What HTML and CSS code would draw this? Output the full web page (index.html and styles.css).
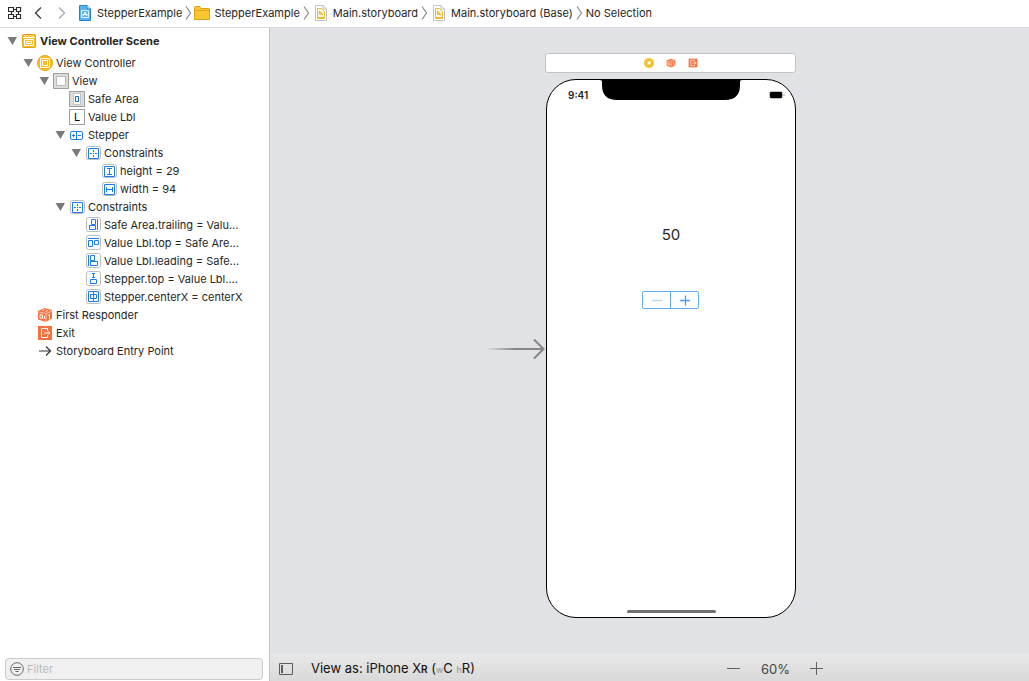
FILE: index.html
```html
<!DOCTYPE html>
<html lang="en">
<head>
<meta charset="utf-8">
<title>Main.storyboard</title>
<link rel="stylesheet" href="styles.css">
</head>
<body>
<svg class="defs" aria-hidden="true">
  <defs>
    <symbol id="tri" viewBox="0 0 10 8"><path d="M.5 0h9.500L5.500 8z" fill="#7a7a7a"/></symbol>
    <symbol id="sep" viewBox="0 0 7 16"><path d="M1 1.500L5.500 8 1 14.500" fill="none" stroke="#8a8a8a" stroke-width="1.200"/></symbol>
    <symbol id="story" viewBox="0 0 12 16">
      <path d="M.5.5h7.500l3.500 3.500v11.500H.5z" fill="#fff" stroke="#c3c3c3"/>
      <path d="M8 .5V4h3.500" fill="none" stroke="#c3c3c3"/>
      <path d="M2.500 3.500h4l3 3v7h-7z" fill="#fffaf0" stroke="#eeb72e"/>
      <path d="M4 6l4 4M5 6.500a2 2 0 0 0 0 3h3" fill="none" stroke="#eeb72e" stroke-width="1.200"/>
      <path d="M2 12.500h8" stroke="#eeb72e"/>
    </symbol>
    <symbol id="frame" viewBox="0 0 16 16">
      <rect x="1.500" y="1.500" width="14" height="13" rx="2" fill="#fff" stroke="#bcbcbc"/>
    </symbol>
    <symbol id="tallframe" viewBox="0 0 16 16">
      <rect x="1.500" y=".5" width="14" height="14" rx="2" fill="#fff" stroke="#bcbcbc"/>
    </symbol>
    <symbol id="constraints" viewBox="0 0 16 16">
      <use href="#frame"/>
      <path d="M3.500 3.500h10v10h-10zM5 8.500h2M8 8.500h1M10 8.500h2M8.500 5v2M8.500 10v2" fill="none" stroke="#1a7cf2"/>
    </symbol>
    <symbol id="cube" viewBox="0 0 16 16">
      <path d="M1 4L7 1l8 2v8.500L9 15l-8-2.500z" fill="#f6723f"/>
      <path d="M1.500 5L9 6.500l6-2.500M9 6.500V15" fill="none" stroke="#fff" stroke-width=".6"/>
      <path d="M5 3.500l2.500-1M8.500 4.500L11 3.500" fill="none" stroke="#fff" stroke-width=".8"/>
      <path d="M3 7.500l2.500.5v3.500L3 11zM7.500 9v3M11 8.500l1.500-1v5" fill="none" stroke="#fff" stroke-width=".9"/>
    </symbol>
    <symbol id="exit" viewBox="0 0 16 16">
      <rect x="1" y="1" width="14" height="14" fill="#f6723f"/>
      <path d="M10.500 6V3.500h-6v9h6V10M7 8h6M11.500 6.500L13 8l-1.500 1.500" fill="none" stroke="#fff"/>
    </symbol>
  </defs>
</svg>
<div class="app">
  <header class="jumpbar">
    <button class="tool" aria-label="Related items"><svg width="14" height="14" viewBox="0 0 14 14"><path d="M.5 1.500h5v4h-5zM8.500 1.500h4v4h-4zM.5 8.500h5v4h-5zM8.500 8.500h4v4h-4zM5.500 3.500h3M3.500 5.500v3M10.500 5.500v3M5.500 10.500h3" fill="none" stroke="#2b2b2b" stroke-width="1.200"/></svg></button>
    <button class="tool back" aria-label="Back"><svg width="8" height="12" viewBox="0 0 8 12"><path d="M7 .5L1.500 6 7 11.500" fill="none" stroke="#404040" stroke-width="1.400"/></svg></button>
    <button class="tool forward" aria-label="Forward"><svg width="8" height="12" viewBox="0 0 8 12"><path d="M1 .5L6.500 6 1 11.500" fill="none" stroke="#ababab" stroke-width="1.400"/></svg></button>
    <nav class="crumbs" aria-label="Path">
      <a class="crumb" href="#project"><svg width="12" height="16" viewBox="0 0 12 16"><path d="M.5.5h7.500l3.500 3.500v11.500H.5z" fill="#58b4f5" stroke="#267fc9"/><path d="M8 .5V4h3.500" fill="#d7efff" stroke="#267fc9"/><path d="M2.500 5.500h7v7h-7z" fill="none" stroke="#d9f0ff"/><path d="M4 11l2-4 2 4M3.500 9.500h5" fill="none" stroke="#fff"/></svg><span>StepperExample</span></a>
      <svg class="sep"><use href="#sep"/></svg>
      <a class="crumb folder" href="#group"><svg width="16" height="14" viewBox="0 0 16 14"><path d="M.5 1.500q0-1 1-1h4l1.500 2h8q.5 0 .5.500v10.500H.5z" fill="#fbc62f" stroke="#dba118"/><path d="M1 4.500h14" stroke="#e0a51b"/></svg><span>StepperExample</span></a>
      <svg class="sep"><use href="#sep"/></svg>
      <a class="crumb" href="#file"><svg width="12" height="16"><use href="#story"/></svg><span>Main.storyboard</span></a>
      <svg class="sep"><use href="#sep"/></svg>
      <a class="crumb" href="#base"><svg width="12" height="16"><use href="#story"/></svg><span>Main.storyboard (Base)</span></a>
      <svg class="sep"><use href="#sep"/></svg>
      <a class="crumb last" href="#selection"><span>No Selection</span></a>
    </nav>
  </header>
  <div class="work">
    <aside class="outline">
      <ul class="tree">
        <li>
          <div class="row scene-row"><button class="tri" aria-label="Toggle scene"><svg><use href="#tri"/></svg></button><svg class="icon" viewBox="0 0 16 16"><rect x="1.500" y="1.500" width="13" height="13" rx="1" fill="#fabd22" stroke="#e2a010"/><path d="M2 4.500h12" stroke="#fff"/><path d="M3 2.500h1M6 2.500h1M9 2.500h1M12 2.500h1M4.500 3.500h1M7.500 3.500h1M10.500 3.500h1" stroke="#fff3cc"/><path d="M3.500 6.500h9v6h-9zM5.500 8.500h5v2h-5z" fill="none" stroke="#fff"/></svg><span>View Controller Scene</span></div>
          <ul>
            <li>
              <div class="row"><button class="tri" aria-label="Toggle View Controller"><svg><use href="#tri"/></svg></button><svg class="icon" viewBox="0 0 16 16"><circle cx="8" cy="8" r="7.500" fill="#fabd1d" stroke="#e6a40f"/><path d="M3.500 3.500h9v9h-9zM5.500 5.500h5v5h-5z" fill="none" stroke="#fff"/></svg><span>View Controller</span></div>
              <ul>
                <li>
                  <div class="row"><button class="tri" aria-label="Toggle View"><svg><use href="#tri"/></svg></button><svg class="icon" viewBox="0 0 16 16"><path d="M.5.5h15v15H.5z" fill="#dcdcdc" stroke="#9d9d9d"/><path d="M3.500 3.500h9v9h-9z" fill="#fff" stroke="#b8b8b8"/></svg><span>View</span></div>
                  <ul>
                    <li><div class="row leaf"><svg class="icon" viewBox="0 0 16 16"><path d="M.5.5h15v15H.5z" fill="#dcdcdc" stroke="#9d9d9d"/><path d="M4.500 2.500h7v11h-7z" fill="#fff" stroke="#c4c4c4"/><path d="M6.500 5.500h3v5h-3z" fill="#fff" stroke="#1470c0"/></svg><span>Safe Area</span></div></li>
                    <li><div class="row leaf"><span class="icon letter" aria-hidden="true">L</span><span>Value Lbl</span></div></li>
                    <li>
                      <div class="row"><button class="tri" aria-label="Toggle Stepper"><svg><use href="#tri"/></svg></button><svg class="icon" viewBox="0 0 16 16"><rect x="1.500" y="4.500" width="12" height="8" rx="1.500" fill="#fff" stroke="#1a7cf2"/><path d="M7.500 4.500v8M3 8.500h3M4.500 7v3M9 8.500h3" stroke="#1a7cf2"/></svg><span>Stepper</span></div>
                      <ul>
                        <li>
                          <div class="row"><button class="tri" aria-label="Toggle Stepper constraints"><svg><use href="#tri"/></svg></button><svg class="icon"><use href="#constraints"/></svg><span>Constraints</span></div>
                          <ul>
                            <li><div class="row leaf"><svg class="icon" viewBox="0 0 16 16"><use href="#frame"/><path d="M3.500 3.500h10v10h-10zM6 5.500h5M6 11.500h5M8.500 5.500v6" fill="none" stroke="#1a7cf2"/></svg><span>height = 29</span></div></li>
                            <li><div class="row leaf"><svg class="icon" viewBox="0 0 16 16"><use href="#frame"/><path d="M3.500 3.500h10v10h-10zM5.500 6v5M11.500 6v5M5.500 8.500h6" fill="none" stroke="#1a7cf2"/></svg><span>width = 94</span></div></li>
                          </ul>
                        </li>
                      </ul>
                    </li>
                    <li>
                      <div class="row"><button class="tri" aria-label="Toggle View constraints"><svg><use href="#tri"/></svg></button><svg class="icon"><use href="#constraints"/></svg><span>Constraints</span></div>
                      <ul>
                        <li><div class="row leaf"><svg class="icon" viewBox="0 0 16 16"><use href="#tallframe"/><path d="M6.500 2.500h4v5h-4zM4.500 8.500h6v4h-6zM12.500 2v11" fill="none" stroke="#1a7cf2"/></svg><span>Safe Area.trailing = Valu...</span></div></li>
                        <li><div class="row leaf"><svg class="icon" viewBox="0 0 16 16"><use href="#tallframe"/><path d="M3 3.500h11M3.500 5.500h4v6h-4zM9.500 5.500h4v4h-4z" fill="none" stroke="#1a7cf2"/></svg><span>Value Lbl.top = Safe Are...</span></div></li>
                        <li><div class="row leaf"><svg class="icon" viewBox="0 0 16 16"><use href="#tallframe"/><path d="M3.500 2v11M5.500 2.500h4v5h-4zM5.500 8.500h7v4h-7z" fill="none" stroke="#1a7cf2"/></svg><span>Value Lbl.leading = Safe...</span></div></li>
                        <li><div class="row leaf"><svg class="icon" viewBox="0 0 16 16"><use href="#tallframe"/><path d="M7 2.500h3M8.500 2.500v4M7 6.500h3M5.500 8.500h6v4h-6z" fill="none" stroke="#1a7cf2"/></svg><span>Stepper.top = Value Lbl....</span></div></li>
                        <li><div class="row leaf"><svg class="icon" viewBox="0 0 16 16"><use href="#tallframe"/><path d="M3.500 2.500h10v10h-10zM8.500 2v11M5.500 5.500h6v4h-6z" fill="none" stroke="#1a7cf2"/></svg><span>Stepper.centerX = centerX</span></div></li>
                      </ul>
                    </li>
                  </ul>
                </li>
              </ul>
            </li>
            <li><div class="row leaf"><svg class="icon"><use href="#cube"/></svg><span>First Responder</span></div></li>
            <li><div class="row leaf"><svg class="icon"><use href="#exit"/></svg><span>Exit</span></div></li>
            <li><div class="row leaf"><svg class="icon" viewBox="0 0 16 16"><path d="M2 8h11.500M9 3.500L13.500 8 9 12.500" fill="none" stroke="#333" stroke-width="1.200"/></svg><span>Storyboard Entry Point</span></div></li>
          </ul>
        </li>
      </ul>
      <label class="filter">
        <svg width="14" height="14" viewBox="0 0 14 14"><circle cx="7" cy="7" r="6.300" fill="none" stroke="#666"/><path d="M3 5.500h8M4 7.500h6M5.500 9.500h3" stroke="#666"/></svg>
        <input type="text" placeholder="Filter" aria-label="Filter">
      </label>
    </aside>
    <main class="editor">
      <section class="canvas">
        <svg class="entry" width="60" height="22" viewBox="0 0 60 22"><defs><linearGradient id="fade"><stop offset="0" stop-color="#868686" stop-opacity="0"/><stop offset=".5" stop-color="#868686"/></linearGradient></defs><rect y="10" width="58" height="2" fill="url(#fade)"/><path d="M48 1.500L57.500 11 48 20.500" fill="none" stroke="#868686" stroke-width="2"/></svg>
        <div class="scene">
          <div class="dock">
            <svg width="10" height="10" viewBox="0 0 10 10"><circle cx="5" cy="5" r="5" fill="#f5c02d"/><rect x="3.500" y="3.500" width="3" height="3" fill="#fff"/></svg>
            <svg width="10" height="10"><use href="#cube"/></svg>
            <svg width="10" height="10"><use href="#exit"/></svg>
          </div>
          <div class="phone">
            <div class="status">
              <span class="time">9:41</span>
              <svg class="notch" width="142" height="20" viewBox="0 0 142 20"><path d="M0 0h142q-2 0-2 2v3q0 15-15 15H17Q2 20 2 5V2Q2 0 0 0z"/></svg>
              <svg class="battery" width="16" height="8" viewBox="0 0 16 8"><rect x=".5" y=".5" width="13" height="7" rx="2" fill="none" stroke="#bbb"/><rect x="1" y="1" width="12" height="6" rx="1"/><path d="M15 3v2" stroke="#aaa"/></svg>
            </div>
            <div class="value">50</div>
            <div class="stepper">
              <button aria-label="Decrement" disabled><svg width="12" height="12" viewBox="0 0 12 12"><path d="M1 6.500h10" stroke="#b5d7fb" stroke-width="1.400"/></svg></button>
              <button aria-label="Increment"><svg width="12" height="12" viewBox="0 0 12 12"><path d="M1 6.500h10M6.500 1.500v10" stroke="#4b9ff7" stroke-width="1.400"/></svg></button>
            </div>
            <div class="home"></div>
          </div>
        </div>
      </section>
      <footer class="bottombar">
        <button class="tool" aria-label="Toggle outline"><svg width="14" height="12" viewBox="0 0 14 12"><path d="M.5.5h13v11H.5z" fill="none" stroke="#5d5d5d"/><path d="M3 2v8" stroke="#5d5d5d" stroke-width="2"/></svg></button>
        <button class="device">View as: iPhone X<span class="cap">R</span> (<span class="trait">w</span>C <span class="trait">h</span>R)</button>
        <div class="zoom">
          <button class="tool" aria-label="Zoom out"><svg width="14" height="14" viewBox="0 0 14 14"><path d="M0 6.500h13" stroke="#606060"/></svg></button>
          <button class="level">60%</button>
          <button class="tool" aria-label="Zoom in"><svg width="14" height="14" viewBox="0 0 14 14"><path d="M0 6.500h13M6.500 0v13" stroke="#606060"/></svg></button>
        </div>
      </footer>
    </main>
  </div>
</div>
</body>
</html>
```

FILE: styles.css
```css
* { box-sizing: border-box; }
body {
  margin: 0;
  font: 11px/18px Inter, "Liberation Sans", sans-serif;
  color: #262626;
}
button {
  padding: 0;
  border: 0;
  background: none;
  color: inherit;
  font: inherit;
}
svg { display: block; flex: none; }
.defs { display: none; }
.app { display: flex; flex-direction: column; min-height: 100vh; background: #fff; }

.jumpbar {
  display: flex;
  align-items: center;
  height: 28px;
  padding: 0 8px 1px;
  border-bottom: 1px solid #dcdce0;
}
.back { margin-left: 12px; }
.forward { margin-left: 16px; }
.crumbs { display: flex; align-items: center; margin-left: 13px; white-space: nowrap; }
.crumb { display: flex; align-items: center; gap: 6px; color: inherit; text-decoration: none; }
.folder { gap: 4px; margin-left: -3px; }
.last { margin-left: -2px; }
.sep { width: 7px; height: 16px; margin: 0 5px 0 3px; }

.work { display: flex; flex: 1; }
.outline {
  display: flex;
  flex: none;
  flex-direction: column;
  justify-content: space-between;
  width: 270px;
  border-right: 1px solid #c2c2c4;
}
.tree, .tree ul { margin: 0; padding: 0; list-style: none; }
.tree ul { padding-left: 16px; }
.row { display: flex; align-items: center; height: 18px; padding-left: 7px; white-space: nowrap; }
.tree .leaf { padding-left: 21px; }
.scene-row { height: 26px; font-weight: 700; }
.tri { width: 10px; margin-right: 4px; }
.tri svg { width: 10px; height: 8px; }
.icon { width: 16px; height: 16px; margin-right: 3px; }
.letter { border: 1px solid #9d9d9d; color: #000; line-height: 15px; text-align: center; }

.filter {
  display: flex;
  align-items: center;
  gap: 3px;
  height: 22px;
  margin: 0 6px 1px 5px;
  padding: 0 4px;
  border: 1px solid #cacaca;
  border-radius: 4px;
  background: #f0f0f0;
}
.filter input { flex: 1; min-width: 0; padding: 0; border: 0; outline: 0; background: none; font: inherit; }
.filter input::placeholder { color: #b8b8b8; opacity: 1; }

.editor { display: flex; flex: 1; flex-direction: column; min-width: 0; }
.canvas {
  display: flex;
  flex: 1;
  align-items: center;
  padding: 25px 0 36px 216px;
  background: #e1e2e6;
}
.entry { margin-top: 26px; }
.scene { display: flex; flex-direction: column; gap: 6px; margin-left: -1px; }
.dock {
  display: flex;
  align-items: center;
  justify-content: center;
  gap: 12px;
  height: 20px;
  border: 1px solid #c4c4c7;
  border-radius: 3px;
  background: #fff;
}
.phone {
  display: flex;
  flex-direction: column;
  align-items: center;
  width: 250px;
  height: 539px;
  margin-left: 1px;
  border: 1px solid #000;
  border-radius: 30px;
  background: #fff;
}
.status { display: flex; width: 100%; padding-left: 21px; }
.time { width: 32px; margin-top: 6px; font-size: 10px; font-weight: 600; }
.battery { margin: 11px 0 0 27px; }
.value { margin-top: 121px; font-size: 15px; line-height: 20px; }
.stepper {
  display: flex;
  width: 57px;
  height: 18px;
  margin: 46px 1px 0 0;
  border: 1px solid #61acf9;
  border-radius: 2px;
}
.stepper button { display: grid; flex: 1; place-items: center; }
.stepper button + button { border-left: 1px solid #61acf9; }
.home { width: 89px; height: 3px; margin: auto 0 4px; border-radius: 2px; background: #707070; }

.bottombar {
  display: flex;
  align-items: center;
  height: 27px;
  padding: 2px 205px 0 9px;
  background: linear-gradient(#e8e8e8, #d9d9d9);
}
.device { margin-left: 18px; color: #111; font-size: 13px; white-space: nowrap; }
.cap { font-size: 10px; font-weight: 600; }
.trait { color: #929292; font-size: 9px; }
.zoom { display: flex; align-items: center; gap: 20px; margin-left: auto; color: #444; font-size: 13px; }
```
